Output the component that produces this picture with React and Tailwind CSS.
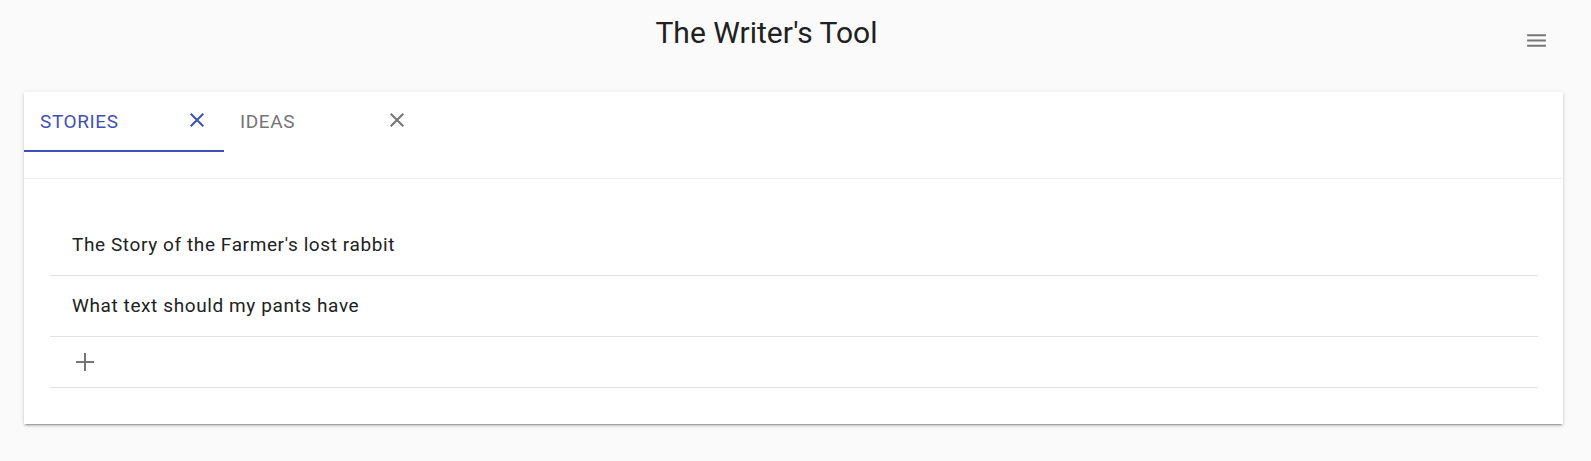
import { useState } from 'react';

const stories = ['The Story of the Farmer\'s lost rabbit', 'What text should my pants have'];

function CloseIcon({ className }) {
  return (
    <svg viewBox="0 0 24 24" className={className} fill="currentColor">
      <path d="M19 6.41L17.59 5 12 10.59 6.41 5 5 6.41 10.59 12 5 17.59 6.41 19 12 13.41 17.59 19 19 17.59 13.41 12z" />
    </svg>
  );
}

function Tab({ label, active, onClick }) {
  return (
    <div
      onClick={onClick}
      className={`relative flex h-[60px] w-[200px] cursor-pointer items-center justify-between pl-4 pr-[15px] ${
        active ? 'text-[#3f51b5]' : 'text-[#757575]'
      }`}
    >
      <span className="text-[19px] leading-[20px] tracking-[0.6px] uppercase">{label}</span>
      <CloseIcon className="-mt-[5px] h-6 w-6" />
      {active && <div className="absolute bottom-0 left-0 h-[2px] w-full bg-[#3f51b5]" />}
    </div>
  );
}

export default function App() {
  const [tab, setTab] = useState('stories');

  return (
    <div className="min-h-[461px] bg-[#fafafa] font-['Roboto','Liberation_Sans',sans-serif] text-[#212121]">
      {/* Header */}
      <header className="flex h-[92px]">
        <h1 className="flex-1 pt-[18px] text-center text-[30px] leading-[30px] font-normal">The Writer's Tool</h1>
        <div className="w-[58px] shrink-0">
          <svg viewBox="0 0 24 24" className="-ml-[9px] mt-[28px] h-[25px] w-[25px] text-[#757575]" fill="currentColor">
            <path d="M3 18h18v-2H3v2zm0-5h18v-2H3v2zm0-7v2h18V6H3z" />
          </svg>
        </div>
      </header>

      {/* Card */}
      <div className="ml-6 mr-[28px] bg-white shadow-[0_2px_2px_rgba(0,0,0,0.14),0_3px_1px_-2px_rgba(0,0,0,0.2),0_1px_5px_rgba(0,0,0,0.12)]">
        <div className="h-[87px] border-b border-[#eeeeee]">
          <div className="flex">
            <Tab label="Stories" active={tab === 'stories'} onClick={() => setTab('stories')} />
            <Tab label="Ideas" active={tab === 'ideas'} onClick={() => setTab('ideas')} />
          </div>
        </div>

        <div className="py-[36px] pl-[26px] pr-[25px]">
          {stories.map((s) => (
            <div key={s} className="flex h-[61px] items-center border-b border-[#e0e0e0] pl-[22px] text-[19px] tracking-[0.6px]">
              {s}
            </div>
          ))}
          <div className="flex h-[51px] items-center border-b border-[#e0e0e0] pl-[26px]">
            <svg viewBox="0 0 18 18" className="h-[18px] w-[18px] text-[#757575]" stroke="currentColor" strokeWidth="2">
              <path d="M9 0v18M0 9h18" />
            </svg>
          </div>
        </div>
      </div>
    </div>
  );
}
